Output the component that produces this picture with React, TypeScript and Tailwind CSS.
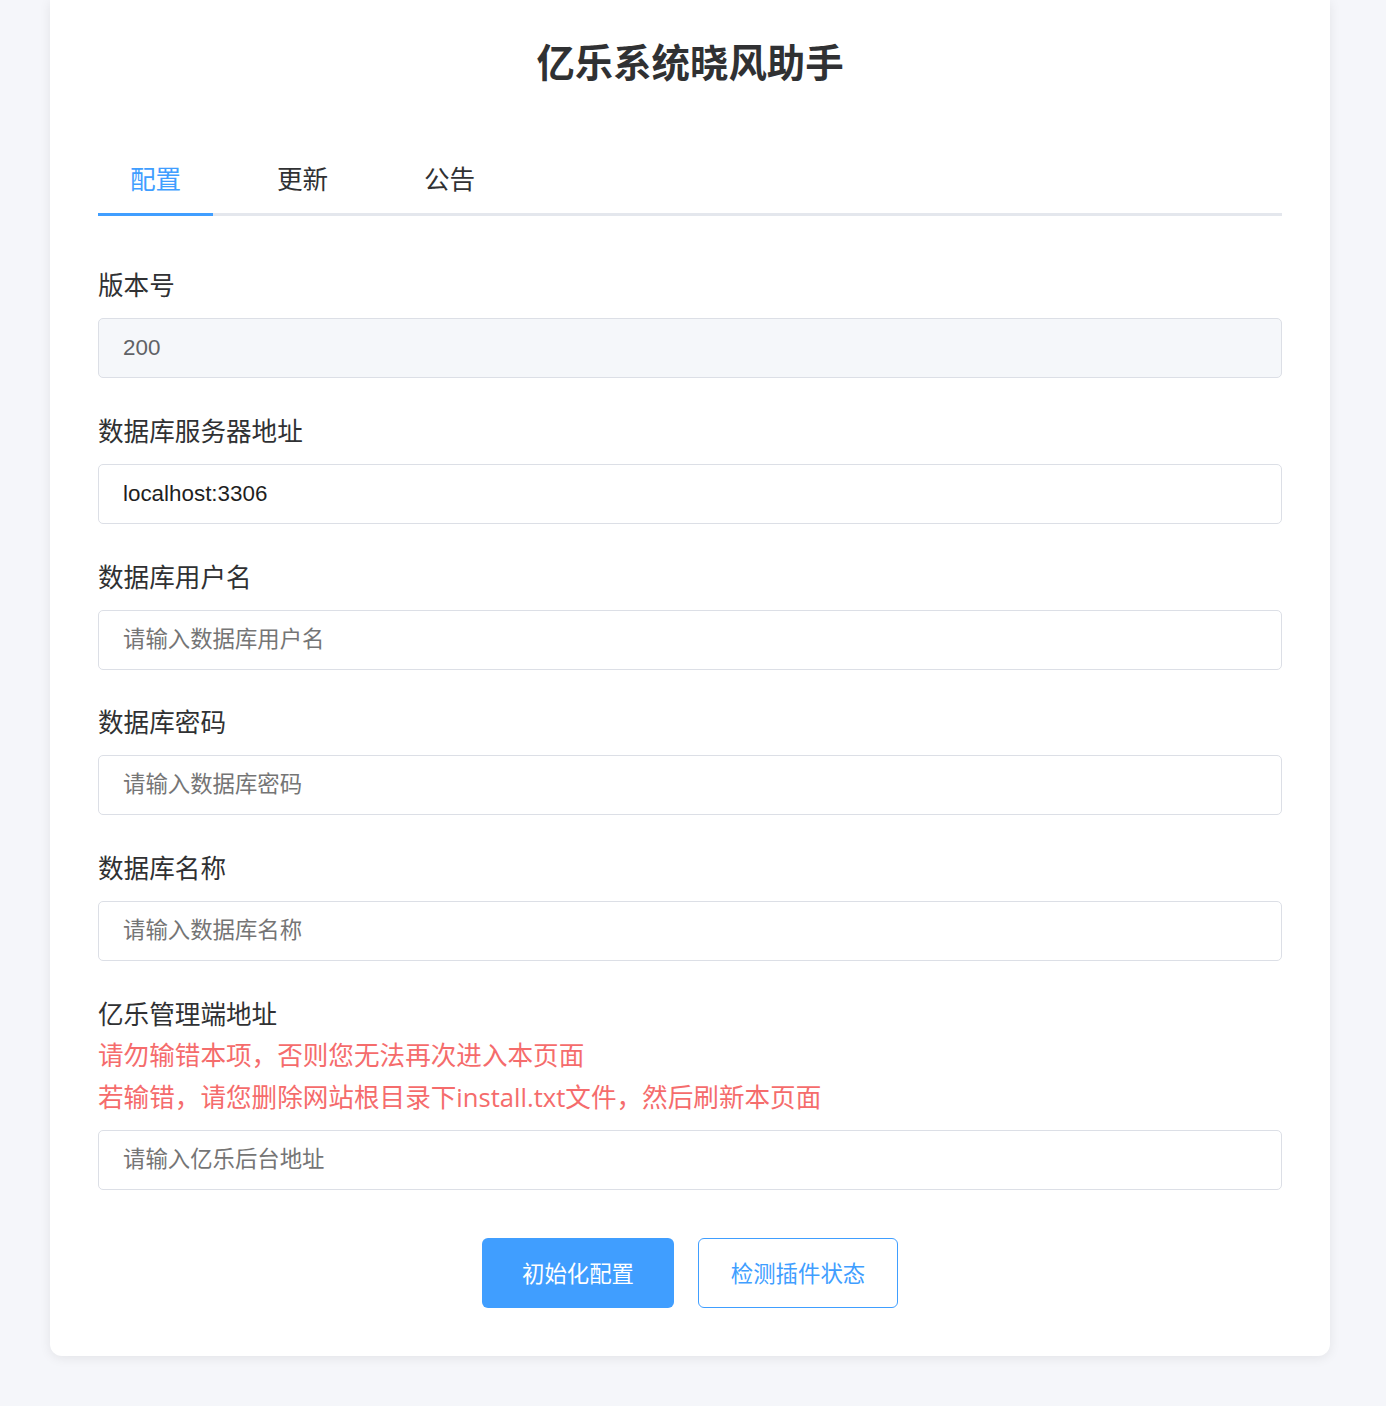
import React from "react";

const font = { fontFamily: '"Liberation Sans", "Noto Sans CJK SC", sans-serif' };

function Field({
  label,
  placeholder,
  value,
  disabled,
  extra,
  last,
}: {
  label: string;
  placeholder?: string;
  value?: string;
  disabled?: boolean;
  extra?: React.ReactNode;
  last?: boolean;
}) {
  return (
    <div className={last ? "" : "mb-[33.8px]"}>
      <div className="text-[25.6px] leading-[41px] text-[#303133] mb-[11px]">
        {label}
        {extra}
      </div>
      <input
        className={`block w-full h-[60px] rounded-[5px] border border-[#dcdfe6] px-[24px] text-[22.4px] outline-none placeholder:text-[#757575] ${
          disabled ? "bg-[#f5f7fa] text-[#606266]" : "bg-white text-[#1f1f1f]"
        }`}
        style={font}
        placeholder={placeholder}
        defaultValue={value}
        disabled={disabled}
      />
    </div>
  );
}

export default function App() {
  return (
    <div className="min-h-screen bg-[#f5f6fa] pb-[51px]" style={font}>
      <div className="w-[1280px] ml-[50px] bg-white rounded-b-[12px] shadow-[0_2px_12px_rgba(0,0,0,0.08)] px-[48px] pt-[35px] pb-[48px]">
        <h1 className="text-center text-[38.4px] leading-[58px] font-bold text-[#303133]">
          亿乐系统晓风助手
        </h1>

        <div className="mt-[68px] flex gap-[32px] border-b-[3px] border-[#e4e7ed]">
          <div className="w-[115px] text-center text-[25.6px] leading-[38px] pb-[14px] text-[#409eff] border-b-[3px] border-[#409eff] -mb-[3px]">
            配置
          </div>
          <div className="w-[115px] text-center text-[25.6px] leading-[38px] pb-[14px] text-[#303133]">
            更新
          </div>
          <div className="w-[115px] text-center text-[25.6px] leading-[38px] pb-[14px] text-[#303133]">
            公告
          </div>
        </div>

        <div className="mt-[50px]">
          <Field label="版本号" value="200" disabled />
          <Field label="数据库服务器地址" value="localhost:3306" />
          <Field label="数据库用户名" placeholder="请输入数据库用户名" />
          <Field label="数据库密码" placeholder="请输入数据库密码" />
          <Field label="数据库名称" placeholder="请输入数据库名称" />
          <Field
            label="亿乐管理端地址"
            placeholder="请输入亿乐后台地址"
            last
            extra={
              <div className="text-[#f56c6c]">
                <div>请勿输错本项，否则您无法再次进入本页面</div>
                <div>
                  若输错，请您删除网站根目录下
                  <span style={{ fontFamily: '"Open Sans", "Noto Sans CJK SC", sans-serif' }}>install.txt</span>
                  文件，然后刷新本页面
                </div>
              </div>
            }
          />
        </div>

        <div className="mt-[48px] flex justify-center gap-[24px]">
          <button className="w-[192px] h-[70px] rounded-[6px] bg-[#409eff] text-white text-[22.4px] pt-[4px]">
            初始化配置
          </button>
          <button className="w-[200px] h-[70px] rounded-[6px] border border-[#409eff] bg-white text-[#409eff] text-[22.4px] pt-[4px]">
            检测插件状态
          </button>
        </div>
      </div>
    </div>
  );
}
